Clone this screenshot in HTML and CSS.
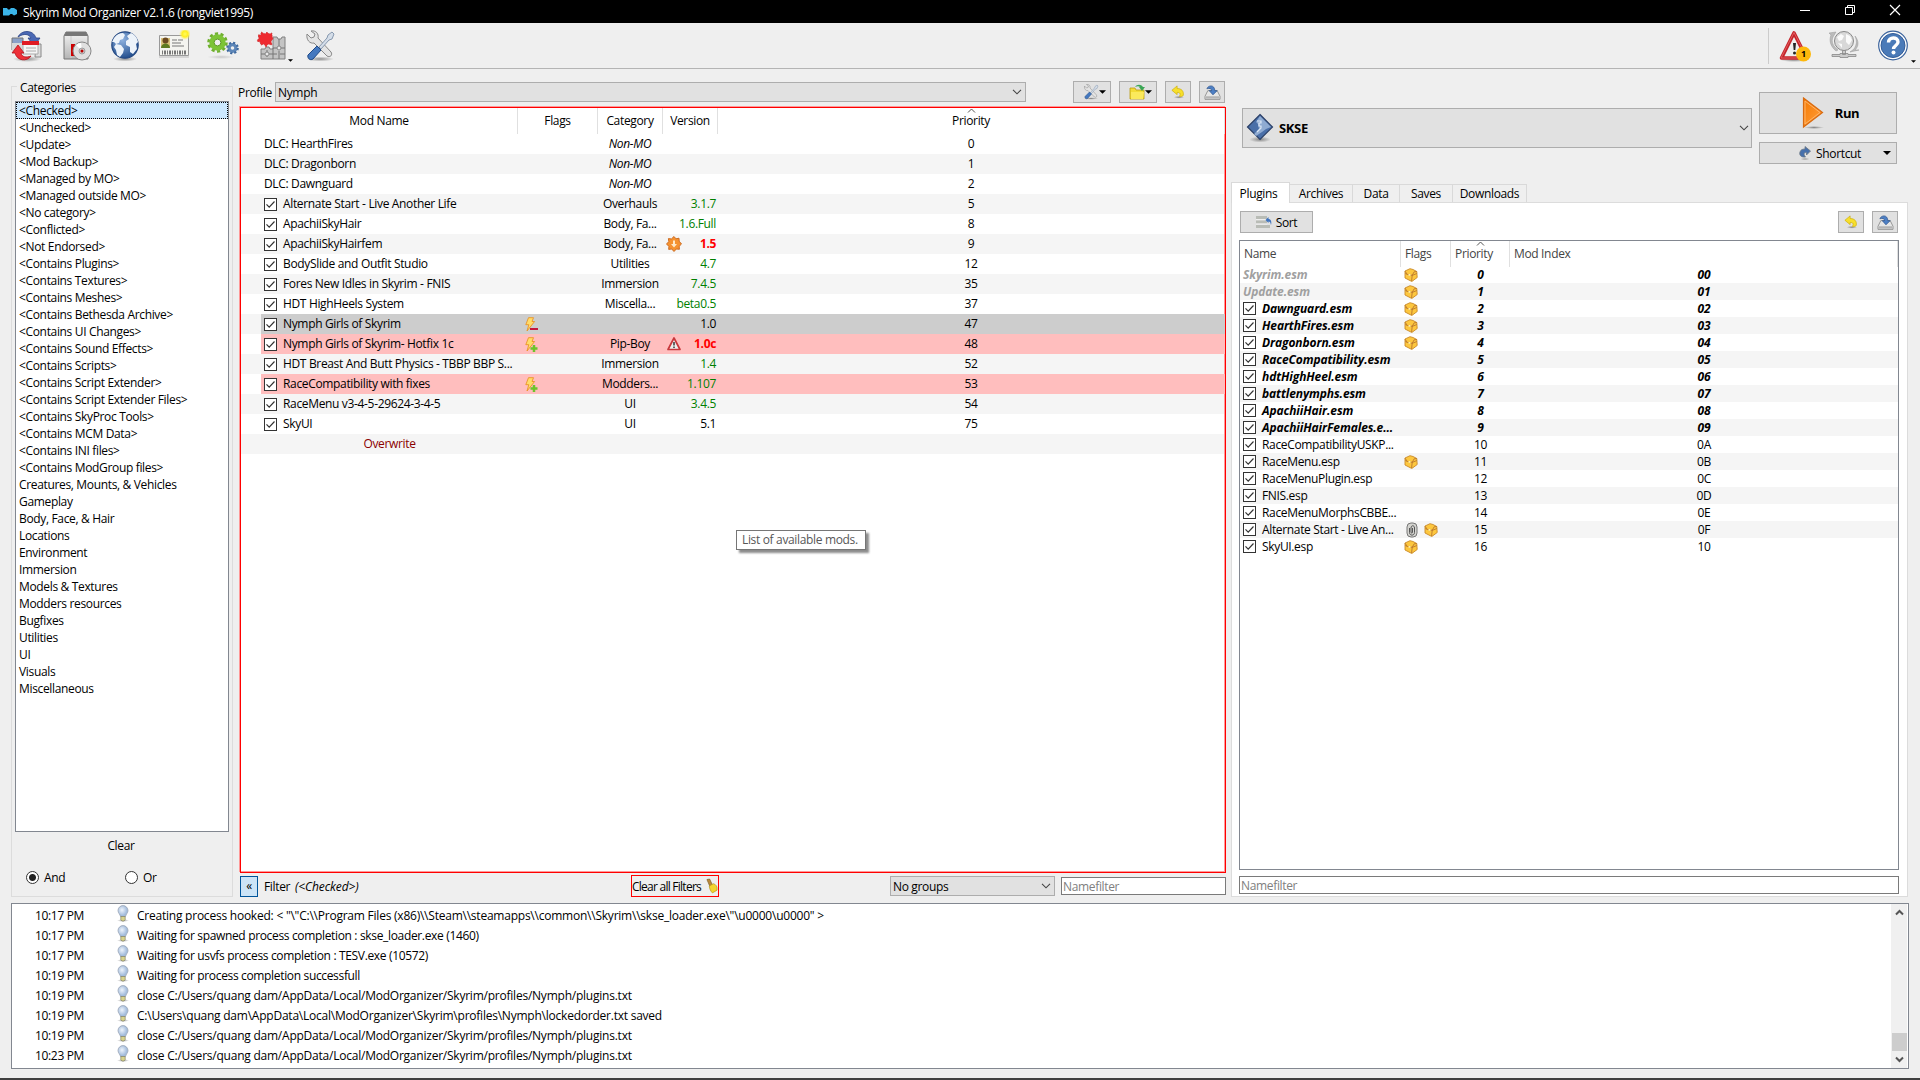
FILE: index.html
```html
<!DOCTYPE html>
<html>
    <head>
        <meta charset="UTF-8">
        <title>Skyrim Mod Organizer v2.1.6 (rongviet1995)</title>
        <link rel="stylesheet" href="styles.css">
    </head>
    <body>
        <!-- shared icons -->
        <svg class="defs">
            <defs>
                <linearGradient id="gBlue" x1="0" y1="0" x2="1" y2="1"><stop offset="0" stop-color="#b9cfec"/><stop offset="1" stop-color="#2f5796"/></linearGradient>
                <linearGradient id="gGrey" x1="0" y1="0" x2="0" y2="1"><stop offset="0" stop-color="#f4f4f4"/><stop offset="1" stop-color="#b4b4b4"/></linearGradient>
                <linearGradient id="gOrange" x1="0" y1="0" x2="1" y2="1"><stop offset="0" stop-color="#f57900"/><stop offset="1" stop-color="#ffa040"/></linearGradient>
                <radialGradient id="gOcean" cx=".4" cy=".3" r=".7"><stop offset="0" stop-color="#8fb2e0"/><stop offset="1" stop-color="#24508f"/></radialGradient>
                <radialGradient id="gShade"><stop offset="0" stop-color="#000" stop-opacity=".4"/><stop offset="1" stop-color="#000" stop-opacity="0"/></radialGradient>
                <radialGradient id="gSun"><stop offset="0" stop-color="#fffb60"/><stop offset=".5" stop-color="#ffee20"/><stop offset="1" stop-color="#fff36a" stop-opacity="0"/></radialGradient>
                <radialGradient id="gBulb" cx=".4" cy=".4"><stop offset="0" stop-color="#eef4fc"/><stop offset="1" stop-color="#a3bcdc"/></radialGradient>
            </defs>
            <symbol id="check" viewBox="0 0 13 13"><rect x=".5" y=".5" width="12" height="12" fill="#fff" stroke="#333"/><path d="M2.5 6.3l2.7 2.8 5.3-5.6" fill="none" stroke="#333" stroke-width="1.2"/></symbol>
            <symbol id="down" viewBox="0 0 10 6"><path d="M1 .8l4 4 4-4" fill="none" stroke="#444" stroke-width="1.1"/></symbol>
            <symbol id="tri" viewBox="0 0 8 4"><path d="M0 0h8L4 4z"/></symbol>
            <symbol id="box" viewBox="0 0 14 14"><path d="M1 3l5-2.3 3 .8 3.8 2 .4 6-5.4 4L1 10z" fill="#fdc73e" stroke="#c98a28" stroke-width=".9"/><path d="M1 3.2l2.4 3.3 4.8.8 2-3.5 2.6-.3M8.2 7.3l-.6 5.7M8 7.5l4.8-2M3.4 6.5l-2-1" fill="none" stroke="#b9762c" stroke-width=".9"/><path d="M4.5 6h2v1.8h-2z" fill="#fff0a8"/></symbol>
            <symbol id="bolt" viewBox="0 0 15 15"><path d="M4.500.700h5L8 4.500h2.600L3 14l1.800-6.300H1.800z" fill="#ffdc6a" stroke="#ea9426" stroke-width=".9"/></symbol>
            <symbol id="tools" viewBox="0 0 32 32"><ellipse cx="16" cy="29" rx="14" ry="2.5" fill="url(#gShade)"/><path d="M3 4l4 4 3-1 1-3-4-3c5-1 8 3 7 7l13 14c2 3-1 6-4 4L10 13C6 14 2 10 3 4z" fill="#e4e4e4" stroke="#888"/><path d="M28 2l2 2-2 5-3 1-8 9-2-2 8-9 1-3z" fill="#d4dde8" stroke="#7d90a8" stroke-width=".9"/><path d="M13 16l4 4-8 9c-3 2-6-1-5-4z" fill="#4478bf" stroke="#204a87"/></symbol>
            <symbol id="undo" viewBox="0 0 16 16"><ellipse cx="9" cy="14" rx="6" ry="1.6" fill="url(#gShade)"/><path d="M1 6l6-5v3c5 0 8 3 7 8-1 1-3 1.500-4.500 1C11.500 10 10 8.500 7 8.500V11z" fill="#f7df2c" stroke="#c8a900" stroke-width=".7"/></symbol>
            <symbol id="save" viewBox="0 0 18 16"><path d="M4 6h10l3 6v3.300H1V12z" fill="#e6e6e6" stroke="#888" stroke-width=".9"/><path d="M2 12h14v2.500H2z" fill="#b4b4b4"/><path d="M3 4c1-3 5-4 7-2 1 1 1.500 2.500 1.500 4H14l-4.500 4.500L5.500 6H8c0-2-2-3-5-2z" fill="#4d7fc4" stroke="#274e88" stroke-width=".7"/></symbol>
            <symbol id="bulb" viewBox="0 0 12 17"><ellipse cx="6" cy="15.500" rx="6" ry="1.500" fill="url(#gShade)"/><path d="M6 .6a5 5 0 0 1 5 5c0 2.500-2.200 3.600-2.500 6h-5C3.200 9.200 1 8.100 1 5.600a5 5 0 0 1 5-5z" fill="url(#gBulb)" stroke="#9aa5b5" stroke-width=".8"/><path d="M3.800 11.500h4.400v3.200L7 16H5l-1.200-1.300z" fill="#d8d38c" stroke="#77775a" stroke-width=".6"/></symbol>
        </svg>

        <header class="titlebar">
            <svg class="logo" width="14" height="8" viewBox="0 0 14 8"><path d="M0 0h4l1 1.500h1.500L8 0h3l3 2v4l-3 1.500L9 6H7.500L6 7.500H0z" fill="#3bb4e8"/></svg>
            <span class="title">Skyrim Mod Organizer v2.1.6 (rongviet1995)</span>
            <div class="winbtns">
                <svg width="12" height="12"><path d="M1 6.500h10" stroke="#fff"/></svg>
                <svg width="12" height="12" fill="none" stroke="#fff"><path d="M1.500 3.500h7v7h-7zM3.500 3v-1.500h7v7H9"/></svg>
                <svg width="12" height="12"><path d="M1 1l10 10M11 1L1 11" stroke="#fff" stroke-width="1.200"/></svg>
            </div>
        </header>

        <nav class="toolbar">
            <svg class="tool" viewBox="0 0 32 32"><ellipse cx="16" cy="29" rx="14" ry="3" fill="url(#gShade)"/><path d="M1 8h11v12H1z" fill="#8aa0c8" stroke="#777"/><path d="M1 13h11v8H1z" fill="#d8d8d8"/><path d="M25 14h5v13h-6z" fill="#ddd" stroke="#888"/><path d="M7 7c3-7 15-8 18 1h4l-6 8-6-8h3c-2-4-7-5-13-1z" fill="#4a68b4" stroke="#2c4486" stroke-width=".8"/><path d="M12 12h15v12H12z" fill="#f5f5f5" stroke="#aaa"/><path d="M11 11h17v4H11z" fill="#e01b24"/><path d="M15 18h10M15 21h10" stroke="#aaa"/><path d="M20 26c-4 6-14 5-16-3H1l6-8 6 8h-3c1 4 5 5 10 3z" fill="#ee3038" stroke="#b41018" stroke-width=".8"/></svg>
            <svg class="tool" viewBox="0 0 32 32"><path d="M6 2h20l2 4v23H4V6z" fill="url(#gGrey)" stroke="#777"/><path d="M4 6h24l-2-4H6z" fill="#777"/><path d="M11 6v22" stroke="#ccc"/><path d="M11 14h4v12h-4z" fill="#c00"/><circle cx="22" cy="21" r="9" fill="#e0e0e0" stroke="#888"/><path d="M22 21l-6-6a9 9 0 0 1 5-2z" fill="#fff"/><circle cx="22" cy="21" r="3" fill="#ccc" stroke="#888" stroke-width=".7"/><circle cx="22" cy="21" r="1.500" fill="#b00"/></svg>
            <svg class="tool" viewBox="0 0 32 32"><ellipse cx="16" cy="29" rx="12" ry="2.500" fill="url(#gShade)"/><circle cx="16" cy="15" r="13.200" fill="url(#gOcean)" stroke="#244882" stroke-width="1.200"/><path d="M5 8c3-4 6-5 9-5l2 2-2 4-3 1-1 3-3 1-2-2-2 0zM7 14l5 1 3 4-1 4-3 4-3-2-1-5-2-3zM18 6l4-3c4 2 6 4 7 9l-2 2 1 5-4 5-3-2 0-5-4-2 0-4 3-2z" fill="#edf3fa"/></svg>
            <svg class="tool" viewBox="0 0 32 32"><path d="M1.500 5.500h29v20h-29z" fill="#f4f4f0" stroke="#999"/><path d="M1 27h30" stroke="#bbb"/><path d="M3 8h9v10H3z" fill="#d9c27a"/><circle cx="7.500" cy="10.500" r="3" fill="#6b4a20"/><path d="M3 18c0-6 9-6 9 0z" fill="#5e7a20"/><path d="M14 10h5m1 0h5M14 13h9M14 16h12" stroke="#777"/><path d="M4 22.500h24" stroke="#777" stroke-width="4" stroke-dasharray="1 1 2 1"/><circle cx="27" cy="4" r="6" fill="url(#gSun)"/></svg>
            <svg class="tool" viewBox="0 0 32 32"><ellipse cx="14" cy="27" rx="14" ry="2" fill="url(#gShade)" opacity=".4"/><circle cx="10.500" cy="12.500" r="5.700" fill="none" stroke="#7cc436" stroke-width="5"/><circle cx="10.500" cy="12.500" r="9" fill="none" stroke="#6fb02e" stroke-width="2.500" stroke-dasharray="3.200 2.450"/><circle cx="10.500" cy="12.500" r="3.400" fill="#efefef" stroke="#5b9a20"/><circle cx="25.500" cy="18" r="3.400" fill="none" stroke="#5d86b8" stroke-width="3.200"/><circle cx="25.500" cy="18" r="5.300" fill="none" stroke="#3d689e" stroke-width="2" stroke-dasharray="2.100 2.060"/></svg>
            <div class="tool-drop">
                <svg class="tool" viewBox="0 0 32 32"><path d="M17 7h4l1 2h3l1-2h3v22H5V19h4l1-2h3l1 2h3z" fill="#c4c4c4" stroke="#808080"/><path d="M17 18v11M5 24h4m4 0h8m3 0h5M17 18h4m3 0h5M23 9v7m0 5v8M11 20v7" stroke="#777" fill="none"/><circle cx="11" cy="24" r="2" fill="#e8e8e8" stroke="#888"/><circle cx="23" cy="18" r="2" fill="#e8e8e8" stroke="#888"/><path d="M2 5l3 0 0-3 4 2 2-2 2 2 3-1v3l1 3-2 2 1 4-4-1-2 3-2-3-3 1-1-3-3-1 2-3z" fill="#ee2a30" stroke="#c33" stroke-width=".8" stroke-dasharray="2 1"/></svg>
                <svg class="tri" width="5" height="3"><use href="#tri"/></svg>
            </div>
            <svg class="tool"><use href="#tools"/></svg>
            <div class="toolbar-right">
                <svg class="tool" viewBox="0 0 32 32"><ellipse cx="15" cy="30" rx="14" ry="2" fill="url(#gShade)"/><path d="M15 3L27.500 28h-25z" fill="#efefef" stroke="#c4242a" stroke-width="3.600" stroke-linejoin="round"/><path d="M15 2.500L28 28H2z" fill="none" stroke="#e8686c" stroke-width=".8" stroke-linejoin="round"/><path d="M14 13h3l-.7 7h-1.600z" fill="#222"/><circle cx="15.500" cy="23" r="1.500" fill="#222"/><circle cx="24.500" cy="24" r="7.500" fill="#fdb80c"/><text x="24.500" y="27.200" class="badge">1</text></svg>
                <svg class="tool" viewBox="0 0 32 32"><path d="M1 3l7-1-3 5c-2 5 0 9 5 13l-2 1C2 16 1 10 3 5zM27 6c4 5 4 10 0 14h4l-9 2 4-3c3-5 3-8 1-13z" fill="#bbb" stroke="#999" stroke-width=".5"/><circle cx="16" cy="11" r="9.500" fill="#d8d8d8" stroke="#888"/><path d="M9 7l4-3 3 2-2 4-3 1zM18 4l4 2 2 4-3 5-3-3zM10 13l4 1 0 4z" fill="#fafafa"/><path d="M14.500 20.500h3v4h-3zM4 24.500h8v-1h8v1h8v2h-8v1h-8v-1H4z" fill="#ccc" stroke="#888" stroke-width=".8"/></svg>
                <svg class="tool" viewBox="0 0 32 32"><circle cx="16" cy="15.500" r="14.300" fill="#fff" stroke="#3a629c" stroke-width="1.200"/><circle cx="16" cy="15.500" r="12" fill="#4a7ab8" stroke="#345d98"/><path d="M11.500 12.500c0-6 9.500-6 9.500-.5 0 3.500-4.500 3.500-4.500 7" fill="none" stroke="#fff" stroke-width="3.400"/><circle cx="16.500" cy="22.500" r="2" fill="#fff"/></svg>
                <svg class="tri" width="5" height="3"><use href="#tri"/></svg>
            </div>
        </nav>

        <main class="main">
            <fieldset class="categories">
                <legend>Categories</legend>
                <ul class="cat-list">
                    <li class="selected">&lt;Checked&gt;</li>
                    <li>&lt;Unchecked&gt;</li>
                    <li>&lt;Update&gt;</li>
                    <li>&lt;Mod Backup&gt;</li>
                    <li>&lt;Managed by MO&gt;</li>
                    <li>&lt;Managed outside MO&gt;</li>
                    <li>&lt;No category&gt;</li>
                    <li>&lt;Conflicted&gt;</li>
                    <li>&lt;Not Endorsed&gt;</li>
                    <li>&lt;Contains Plugins&gt;</li>
                    <li>&lt;Contains Textures&gt;</li>
                    <li>&lt;Contains Meshes&gt;</li>
                    <li>&lt;Contains Bethesda Archive&gt;</li>
                    <li>&lt;Contains UI Changes&gt;</li>
                    <li>&lt;Contains Sound Effects&gt;</li>
                    <li>&lt;Contains Scripts&gt;</li>
                    <li>&lt;Contains Script Extender&gt;</li>
                    <li>&lt;Contains Script Extender Files&gt;</li>
                    <li>&lt;Contains SkyProc Tools&gt;</li>
                    <li>&lt;Contains MCM Data&gt;</li>
                    <li>&lt;Contains INI files&gt;</li>
                    <li>&lt;Contains ModGroup files&gt;</li>
                    <li>Creatures, Mounts, &amp; Vehicles</li>
                    <li>Gameplay</li>
                    <li>Body, Face, &amp; Hair</li>
                    <li>Locations</li>
                    <li>Environment</li>
                    <li>Immersion</li>
                    <li>Models &amp; Textures</li>
                    <li>Modders resources</li>
                    <li>Bugfixes</li>
                    <li>Utilities</li>
                    <li>UI</li>
                    <li>Visuals</li>
                    <li>Miscellaneous</li>
                </ul>
                <div class="cat-clear">Clear</div>
                <div class="cat-radios">
                    <span class="radio"><i class="dot on"></i>And</span>
                    <span class="radio"><i class="dot"></i>Or</span>
                </div>
            </fieldset>

            <section class="mods">
                <div class="profile-row">
                    <span class="profile-label">Profile</span>
                    <div class="combo profile-combo"><span>Nymph</span><svg width="10" height="6"><use href="#down"/></svg></div>
                    <span class="btn wide"><svg width="16" height="16"><use href="#tools"/></svg><svg width="7" height="4"><use href="#tri"/></svg></span>
                    <span class="btn wide"><svg width="16" height="16" viewBox="0 0 16 16"><path d="M1 4h5l1 2h8v9H1z" fill="#f4dc36" stroke="#b89a10" stroke-width=".8"/><path d="M2 8h13l-1 7H2z" fill="#fbe95c"/><path d="M6 3c2-3 6-3 8 0h2l-3 4-3-4h1c-1-1-3-1-5 0z" fill="#3aa655"/></svg><svg width="7" height="4"><use href="#tri"/></svg></span>
                    <span class="btn small"><svg width="14" height="14"><use href="#undo"/></svg></span>
                    <span class="btn small"><svg width="17" height="15"><use href="#save"/></svg></span>
                </div>
                <div class="mod-tree">
                    <div class="mod-row head"><span>Mod Name</span><span>Flags</span><span>Category</span><span>Version</span><span class="sorted">Priority</span></div>
                    <div class="mod-row"><span class="name">DLC: HearthFires</span><span class="flag"></span><span class="cat"><i>Non-MO</i></span><span class="ver"></span><span class="prio">0</span></div>
                    <div class="mod-row"><span class="name">DLC: Dragonborn</span><span class="flag"></span><span class="cat"><i>Non-MO</i></span><span class="ver"></span><span class="prio">1</span></div>
                    <div class="mod-row"><span class="name">DLC: Dawnguard</span><span class="flag"></span><span class="cat"><i>Non-MO</i></span><span class="ver"></span><span class="prio">2</span></div>
                    <div class="mod-row"><span class="name"><svg class="check"><use href="#check"/></svg>Alternate Start - Live Another Life</span><span class="flag"></span><span class="cat">Overhauls</span><span class="ver ok">3.1.7</span><span class="prio">5</span></div>
                    <div class="mod-row"><span class="name"><svg class="check"><use href="#check"/></svg>ApachiiSkyHair</span><span class="flag"></span><span class="cat">Body, Fa...</span><span class="ver ok">1.6.Full</span><span class="prio">8</span></div>
                    <div class="mod-row"><span class="name"><svg class="check"><use href="#check"/></svg>ApachiiSkyHairfem</span><span class="flag"></span><span class="cat">Body, Fa...</span><span class="ver old"><svg width="16" height="16" viewBox="0 0 16 16"><path d="M8 .5l2 2.300 3-.6.200 3L15.500 8l-2.300 2.300.2 3-3-.3L8 15.500 5.700 13l-3 .4.200-3L.5 8l2.300-2.400-.4-3 3 .3z" fill="#f59230" stroke="#c8641a" stroke-width=".9"/><path d="M7 4.500h2V8h2l-3 3.500L5 8h2z" fill="#ffe9c8"/></svg>1.5</span><span class="prio">9</span></div>
                    <div class="mod-row"><span class="name"><svg class="check"><use href="#check"/></svg>BodySlide and Outfit Studio</span><span class="flag"></span><span class="cat">Utilities</span><span class="ver ok">4.7</span><span class="prio">12</span></div>
                    <div class="mod-row"><span class="name"><svg class="check"><use href="#check"/></svg>Fores New Idles in Skyrim - FNIS</span><span class="flag"></span><span class="cat">Immersion</span><span class="ver ok">7.4.5</span><span class="prio">35</span></div>
                    <div class="mod-row"><span class="name"><svg class="check"><use href="#check"/></svg>HDT HighHeels System</span><span class="flag"></span><span class="cat">Miscella...</span><span class="ver ok">beta0.5</span><span class="prio">37</span></div>
                    <div class="mod-row current"><span class="name"><svg class="check"><use href="#check"/></svg>Nymph Girls of Skyrim</span><span class="flag"><svg width="15" height="15"><use href="#bolt"/><path d="M6 12h8" stroke="#c4163c" stroke-width="2"/></svg></span><span class="cat"></span><span class="ver">1.0</span><span class="prio">47</span></div>
                    <div class="mod-row conflict"><span class="name"><svg class="check"><use href="#check"/></svg>Nymph Girls of Skyrim- Hotfix 1c</span><span class="flag"><svg width="15" height="15"><use href="#bolt"/><path d="M10 8v7M6.500 11.500h7" stroke="#6cc42c" stroke-width="2.500"/></svg></span><span class="cat">Pip-Boy</span><span class="ver old"><svg width="16" height="16" viewBox="0 0 16 16"><path d="M8 2l6 11.500H2z" fill="#eee" stroke="#c8383c" stroke-width="1.700" stroke-linejoin="round"/><path d="M8 6v3.500m0 1v1.500" stroke="#555" stroke-width="1.800"/></svg>1.0c</span><span class="prio">48</span></div>
                    <div class="mod-row"><span class="name"><svg class="check"><use href="#check"/></svg>HDT Breast And Butt Physics - TBBP BBP S...</span><span class="flag"></span><span class="cat">Immersion</span><span class="ver ok">1.4</span><span class="prio">52</span></div>
                    <div class="mod-row conflict"><span class="name"><svg class="check"><use href="#check"/></svg>RaceCompatibility with fixes</span><span class="flag"><svg width="15" height="15"><use href="#bolt"/><path d="M10 8v7M6.500 11.500h7" stroke="#6cc42c" stroke-width="2.500"/></svg></span><span class="cat">Modders...</span><span class="ver ok">1.107</span><span class="prio">53</span></div>
                    <div class="mod-row"><span class="name"><svg class="check"><use href="#check"/></svg>RaceMenu v3-4-5-29624-3-4-5</span><span class="flag"></span><span class="cat">UI</span><span class="ver ok">3.4.5</span><span class="prio">54</span></div>
                    <div class="mod-row"><span class="name"><svg class="check"><use href="#check"/></svg>SkyUI</span><span class="flag"></span><span class="cat">UI</span><span class="ver">5.1</span><span class="prio">75</span></div>
                    <div class="mod-row"><span class="name overwrite">Overwrite</span><span class="flag"></span><span class="cat"></span><span class="ver"></span><span class="prio"></span></div>
                    <div class="tooltip">List of available mods.</div>
                </div>
                <div class="filter-row">
                    <span class="collapse">«</span>
                    <span class="filter-label">Filter</span>
                    <i class="filter-value">(&lt;Checked&gt;)</i>
                    <span class="clear-filters">Clear all Filters<svg width="12" height="16" viewBox="0 0 13 16"><path d="M1 1l3-.5L7 7 4 8z" fill="#b98a3c" stroke="#7c5a20" stroke-width=".7"/><path d="M3.500 8L8 5.500c3 1 4.500 3 4 7L7 15.500C4.500 13 4 11 3.500 8z" fill="#f3d52e" stroke="#b0921a" stroke-width=".7"/></svg></span>
                    <div class="combo groups"><span>No groups</span><svg width="10" height="6"><use href="#down"/></svg></div>
                    <input class="namefilter" type="text" placeholder="Namefilter">
                </div>
            </section>

            <section class="side">
                <div class="launch">
                    <div class="combo exe"><svg width="28" height="30" viewBox="0 0 28 30"><ellipse cx="14" cy="26.500" rx="11" ry="3" fill="url(#gShade)"/><path d="M14 1.500L26.500 14 14 26.500 1.500 14z" fill="#4a6fa8" stroke="#2a3f66" stroke-width="1.200"/><path d="M14 3L25 14l-5 2-4 3-6 4-2-2 5-5-1-5-2-2z" fill="#8fabd2"/><path d="M11 8h4v2h-2v3h2v2l-4 4" fill="none" stroke="#dbe6f5" stroke-width="1.200"/></svg><b>SKSE</b><svg width="10" height="6"><use href="#down"/></svg></div>
                    <div class="launch-btns">
                        <span class="btn run"><svg width="22" height="32" viewBox="0 0 22 32"><ellipse cx="12" cy="30.500" rx="10" ry="1.500" fill="url(#gShade)"/><path d="M1.500 1l19 14.500-19 14.500z" fill="url(#gOrange)" stroke="#d86a10" stroke-width="1.200"/><path d="M3 4l15 11.500L3 27z" fill="none" stroke="#ffb468"/></svg><b>Run</b></span>
                        <span class="btn shortcut"><svg width="12" height="14" viewBox="0 0 12 14"><ellipse cx="6" cy="13" rx="5" ry="1" fill="url(#gShade)"/><path d="M6 .5L11.500 5 7.500 9V6.500c-3 0-3 2-1 4.500C2 11.500 0 9 1 6c.6-2 2-3 5-3z" fill="#4670ac" stroke="#6a7684" stroke-width=".8"/></svg><span>Shortcut</span><svg class="arrow" width="8" height="4"><use href="#tri"/></svg></span>
                    </div>
                </div>
                <div class="tabs"><span class="tab active">Plugins</span><span class="tab w63">Archives</span><span class="tab w47">Data</span><span class="tab w53">Saves</span><span class="tab w74">Downloads</span></div>
                <div class="tab-page">
                    <div class="sort-row">
                        <span class="btn sort"><svg width="16" height="14" viewBox="0 0 16 14"><path d="M0 1h11v3H0zM0 5.500h11v3H0zM0 10h14v3H0z" fill="#b9bcb6"/><path d="M0 4.500h11M0 9h11" stroke="#efefef"/><path d="M15 10c1-4-.5-6-2.500-6V2L9.500 5l3 3V6.500c1.500 0 2 1 2.500 3.500z" fill="#3f73be"/></svg>Sort</span>
                        <span class="btn small"><svg width="14" height="14"><use href="#undo"/></svg></span>
                        <span class="btn small"><svg width="17" height="15"><use href="#save"/></svg></span>
                    </div>
                    <div class="plugin-tree">
                        <div class="plugin-row head"><span>Name</span><span>Flags</span><span class="sorted">Priority</span><span>Mod Index</span></div>
                        <div class="plugin-row master off"><span class="pname">Skyrim.esm</span><span class="pflag"><svg><use href="#box"/></svg></span><span>0</span><span>00</span></div>
                        <div class="plugin-row master off"><span class="pname">Update.esm</span><span class="pflag"><svg><use href="#box"/></svg></span><span>1</span><span>01</span></div>
                        <div class="plugin-row master"><span class="pname"><svg class="check"><use href="#check"/></svg>Dawnguard.esm</span><span class="pflag"><svg><use href="#box"/></svg></span><span>2</span><span>02</span></div>
                        <div class="plugin-row master"><span class="pname"><svg class="check"><use href="#check"/></svg>HearthFires.esm</span><span class="pflag"><svg><use href="#box"/></svg></span><span>3</span><span>03</span></div>
                        <div class="plugin-row master"><span class="pname"><svg class="check"><use href="#check"/></svg>Dragonborn.esm</span><span class="pflag"><svg><use href="#box"/></svg></span><span>4</span><span>04</span></div>
                        <div class="plugin-row master"><span class="pname"><svg class="check"><use href="#check"/></svg>RaceCompatibility.esm</span><span class="pflag"></span><span>5</span><span>05</span></div>
                        <div class="plugin-row master"><span class="pname"><svg class="check"><use href="#check"/></svg>hdtHighHeel.esm</span><span class="pflag"></span><span>6</span><span>06</span></div>
                        <div class="plugin-row master"><span class="pname"><svg class="check"><use href="#check"/></svg>battlenymphs.esm</span><span class="pflag"></span><span>7</span><span>07</span></div>
                        <div class="plugin-row master"><span class="pname"><svg class="check"><use href="#check"/></svg>ApachiiHair.esm</span><span class="pflag"></span><span>8</span><span>08</span></div>
                        <div class="plugin-row master"><span class="pname"><svg class="check"><use href="#check"/></svg>ApachiiHairFemales.e...</span><span class="pflag"></span><span>9</span><span>09</span></div>
                        <div class="plugin-row"><span class="pname"><svg class="check"><use href="#check"/></svg>RaceCompatibilityUSKP...</span><span class="pflag"></span><span>10</span><span>0A</span></div>
                        <div class="plugin-row"><span class="pname"><svg class="check"><use href="#check"/></svg>RaceMenu.esp</span><span class="pflag"><svg><use href="#box"/></svg></span><span>11</span><span>0B</span></div>
                        <div class="plugin-row"><span class="pname"><svg class="check"><use href="#check"/></svg>RaceMenuPlugin.esp</span><span class="pflag"></span><span>12</span><span>0C</span></div>
                        <div class="plugin-row"><span class="pname"><svg class="check"><use href="#check"/></svg>FNIS.esp</span><span class="pflag"></span><span>13</span><span>0D</span></div>
                        <div class="plugin-row"><span class="pname"><svg class="check"><use href="#check"/></svg>RaceMenuMorphsCBBE...</span><span class="pflag"></span><span>14</span><span>0E</span></div>
                        <div class="plugin-row"><span class="pname"><svg class="check"><use href="#check"/></svg>Alternate Start - Live An...</span><span class="pflag"><svg class="clip" viewBox="0 0 14 16"><rect x="3" y="1" width="10" height="14" rx="4" fill="#d4d4d0" stroke="#777"/><path d="M5.500 6v4.500c0 3.500 5 3.500 5 0V6c0-3-3.500-3-3.500 0v4c0 1.500 1.500 1.500 1.500 0V6" fill="none" stroke="#555"/></svg><svg><use href="#box"/></svg></span><span>15</span><span>0F</span></div>
                        <div class="plugin-row"><span class="pname"><svg class="check"><use href="#check"/></svg>SkyUI.esp</span><span class="pflag"><svg><use href="#box"/></svg></span><span>16</span><span>10</span></div>
                    </div>
                    <input class="namefilter" type="text" placeholder="Namefilter">
                </div>
            </section>
        </main>

        <section class="log">
            <div class="log-rows">
                <div class="log-row"><span>10:17 PM</span><svg><use href="#bulb"/></svg><span class="path">Creating process hooked: &lt; "\"C:\\Program Files (x86)\\Steam\\steamapps\\common\\Skyrim\\skse_loader.exe\"\u0000\u0000" &gt;</span></div>
                <div class="log-row"><span>10:17 PM</span><svg><use href="#bulb"/></svg><span>Waiting for spawned process completion : skse_loader.exe (1460)</span></div>
                <div class="log-row"><span>10:17 PM</span><svg><use href="#bulb"/></svg><span>Waiting for usvfs process completion : TESV.exe (10572)</span></div>
                <div class="log-row"><span>10:19 PM</span><svg><use href="#bulb"/></svg><span>Waiting for process completion successfull</span></div>
                <div class="log-row"><span>10:19 PM</span><svg><use href="#bulb"/></svg><span class="path">close C:/Users/quang dam/AppData/Local/ModOrganizer/Skyrim/profiles/Nymph/plugins.txt</span></div>
                <div class="log-row"><span>10:19 PM</span><svg><use href="#bulb"/></svg><span class="path">C:\Users\quang dam\AppData\Local\ModOrganizer\Skyrim\profiles\Nymph\lockedorder.txt saved</span></div>
                <div class="log-row"><span>10:19 PM</span><svg><use href="#bulb"/></svg><span class="path">close C:/Users/quang dam/AppData/Local/ModOrganizer/Skyrim/profiles/Nymph/plugins.txt</span></div>
                <div class="log-row"><span>10:23 PM</span><svg><use href="#bulb"/></svg><span class="path">close C:/Users/quang dam/AppData/Local/ModOrganizer/Skyrim/profiles/Nymph/plugins.txt</span></div>
            </div>
            <div class="scrollbar">
                <svg width="9" height="7" viewBox="0 0 9 7"><path d="M1 5.500L4.500 2 8 5.500" fill="none" stroke="#555" stroke-width="2"/></svg>
                <div class="thumb"></div>
                <svg width="9" height="7" viewBox="0 0 9 7"><path d="M1 1.500L4.500 5 8 1.500" fill="none" stroke="#555" stroke-width="2"/></svg>
            </div>
        </section>
        <footer class="edge"></footer>
    </body>
</html>
```
FILE: styles.css
```css
* {
    box-sizing: border-box;
}
body {
    margin: 0;
    width: 1920px;
    height: 1080px;
    overflow: hidden;
    display: flex;
    flex-direction: column;
    background: #efefef;
    color: #000;
    font-family: "Open Sans", "Noto Sans", sans-serif;
    font-size: 12px;
    letter-spacing: -0.34px;
    white-space: nowrap;
    cursor: default;
}
svg {
    flex: none;
    display: block;
}
.defs {
    position: absolute;
    width: 0;
    height: 0;
}

/* title bar */
.titlebar {
    height: 23px;
    background: #000;
    color: #fff;
    display: flex;
    align-items: center;
    padding-left: 3px;
}
.title {
    margin: 1px 0 0 6px;
}
.winbtns {
    margin-left: auto;
    display: flex;
    gap: 33px;
    padding: 0 19px 3px 0;
}

/* toolbar */
.toolbar {
    height: 46px;
    border-bottom: 1px solid #b4b4b4;
    display: flex;
    align-items: center;
    gap: 17px;
    padding: 1px 4px 0 11px;
}
.tool {
    width: 32px;
    height: 32px;
}
.tool-drop {
    display: flex;
    align-items: flex-end;
}
.tool-drop .tri {
    margin-right: -6px;
}
.toolbar-right {
    margin-left: auto;
    height: 36px;
    border-left: 1px solid #ccc;
    padding-left: 10px;
    display: flex;
    align-items: center;
    gap: 17px;
}
.toolbar-right .tri {
    margin: 30px 0 0 -15px;
}
.badge {
    font-size: 9px;
    font-weight: bold;
    text-anchor: middle;
    letter-spacing: 0;
}

.main {
    height: 834px;
    display: flex;
}
.btn {
    flex: none;
    display: flex;
    align-items: center;
    justify-content: center;
    height: 22px;
    border: 1px solid #adadad;
    background: #e1e1e1;
}
.btn.wide {
    width: 38px;
    margin-right: 8px;
    padding-left: 4px;
}
.btn.small {
    width: 26px;
}
.combo {
    display: flex;
    align-items: center;
    justify-content: space-between;
    height: 20px;
    border: 1px solid #adadad;
    background: #e1e1e1;
    padding: 0 3px 0 2px;
}
.check {
    width: 13px;
    height: 13px;
}

/* categories */
.categories {
    width: 222px;
    height: 819px;
    min-width: 0;
    margin: 9px 0 0 11px;
    padding: 7px 3px 0;
    border: 1px solid #dcdcdc;
}
.categories legend {
    height: 16px;
    line-height: 19px;
    margin-left: 2px;
    padding: 0 3px;
}
.cat-list {
    list-style: none;
    margin: 0;
    padding: 0;
    width: 214px;
    height: 731px;
    border: 1px solid #828790;
    background: #fff;
}
.cat-list li {
    height: 17px;
    line-height: 17px;
    padding-left: 3px;
}
.cat-list .selected {
    background: #cce8ff;
    outline: 1px dotted #000;
    outline-offset: -1px;
}
.cat-clear {
    text-align: center;
    margin-top: 5px;
    padding-right: 2px;
    line-height: 17px;
}
.cat-radios {
    display: flex;
    margin: 15px 0 0 11px;
}
.radio {
    display: flex;
    align-items: center;
    width: 99px;
    gap: 5px;
}
.dot {
    width: 13px;
    height: 13px;
    border: 1px solid #333;
    border-radius: 50%;
    background: #fff;
}
.dot.on {
    background: radial-gradient(circle, #222 3px, #fff 4px);
}

/* mod list */
.mods {
    width: 988px;
    margin-left: 5px;
    padding-top: 12px;
}
.profile-row {
    display: flex;
    align-items: center;
    height: 22px;
}
.profile-label {
    width: 37px;
}
.profile-combo {
    width: 751px;
    margin-right: 47px;
}
.profile-row .small + .small {
    margin-left: 8px;
}
.mod-tree {
    position: relative;
    height: 766px;
    margin: 4px 0 0 2px;
    border: 1px solid #f00;
    box-shadow: -1px -1px #f99, inset -1px -1px #f99;
    background: #fff;
}
.mod-row {
    display: grid;
    grid-template-columns: 277px 80px 65px 55px 507px;
    height: 20px;
    line-height: 20px;
    margin-right: 1px;
}
.mod-row:nth-child(odd) {
    background: #f5f5f5;
}
.mod-row.head {
    height: 25px;
    line-height: 26px;
    margin-bottom: 1px;
    text-align: center;
    background: #fff;
}
.head > span {
    border-right: 1px solid #e0e0e0;
}
.sorted {
    background: url("data:image/svg+xml,%3Csvg xmlns='http://www.w3.org/2000/svg' width='9' height='5'%3E%3Cpath d='M1 4.500l3.500-3.500 3.500 3.500' fill='none' stroke='%23555'/%3E%3C/svg%3E") center 0 no-repeat;
}
.name {
    display: flex;
    align-items: center;
    gap: 6px;
    margin-left: 20px;
    padding-left: 3px;
}
.overwrite {
    justify-content: center;
    padding-left: 0;
    color: #8b0000;
}
.flag {
    display: flex;
    align-items: center;
    padding-left: 6px;
}
.cat,
.prio {
    text-align: center;
    padding-right: 1px;
}
.ver {
    display: flex;
    align-items: center;
    justify-content: flex-end;
    padding: 0 2px 0 3px;
}
.ver svg {
    margin-right: auto;
}
.ver.ok {
    color: #008000;
}
.ver.old {
    color: #f00;
    font-weight: bold;
}
.mod-row.current > span {
    background: #cdcdcd;
}
.mod-row.conflict > span {
    background: #ffbebe;
}
.tooltip {
    position: absolute;
    left: 495px;
    top: 422px;
    width: 130px;
    height: 20px;
    line-height: 18px;
    padding-left: 5px;
    color: #575757;
    background: #fff;
    border: 1px solid #767676;
    box-shadow: 3px 3px 2px rgba(0, 0, 0, 0.45);
}

.filter-row {
    display: flex;
    align-items: center;
    height: 22px;
    margin: 2px 0 0 2px;
}
.collapse {
    width: 18px;
    height: 21px;
    line-height: 18px;
    text-align: center;
    border: 1px solid #00549a;
    background: #cce4f7;
}
.filter-label {
    width: 31px;
    margin-left: 6px;
}
.filter-value {
    width: 336px;
    letter-spacing: -0.1px;
}
.clear-filters {
    display: flex;
    align-items: center;
    justify-content: space-between;
    width: 88px;
    height: 22px;
    border: 1px solid #f00;
    letter-spacing: -0.75px;
}
.groups {
    width: 165px;
    margin: 0 6px 0 171px;
}
.namefilter {
    width: 165px;
    height: 18px;
    padding: 0 1px;
    border: 1px solid #7a7a7a;
    background: #fff;
    font: inherit;
    letter-spacing: inherit;
}
.namefilter::placeholder {
    color: #808080;
}

/* right side */
.side {
    width: 677px;
    margin-left: 5px;
    padding-top: 23px;
}
.launch {
    display: flex;
    height: 90px;
    padding-left: 11px;
}
.exe {
    width: 510px;
    height: 40px;
    margin: 16px 7px 0 0;
    padding: 0 2px 0 3px;
    font-size: 13px;
}
.exe b {
    margin: 0 auto 0 5px;
}
.run {
    width: 138px;
    height: 42px;
    margin-bottom: 8px;
    padding-left: 5px;
    gap: 11px;
    font-size: 13px;
}
.shortcut {
    width: 138px;
    padding: 0 5px 0 39px;
    gap: 5px;
}
.shortcut .arrow {
    margin-left: auto;
}
.tabs {
    display: flex;
    align-items: flex-end;
    height: 20px;
}
.tab {
    height: 18px;
    line-height: 18px;
    text-align: center;
    border: 1px solid #d9d9d9;
    border-width: 1px 1px 0 0;
}
.tab.active {
    width: 59px;
    height: 21px;
    margin-bottom: -1px;
    padding-right: 4px;
    border-left-width: 1px;
    background: #fff;
    z-index: 1;
    line-height: 21px;
}
.w63 {
    width: 63px;
}
.w47 {
    width: 47px;
}
.w53 {
    width: 53px;
}
.w74 {
    width: 74px;
}
.tab-page {
    height: 695px;
    border: 1px solid #dcdcdc;
    background: #fff;
    padding: 8px 8px 0 7px;
}
.sort-row {
    display: flex;
    margin: 0 1px 7px;
}
.sort-row .small {
    margin-left: 8px;
}
.sort {
    width: 73px;
    gap: 4px;
    margin-right: auto;
}
.plugin-tree {
    height: 630px;
    border: 1px solid #828790;
    margin-bottom: 6px;
}
.plugin-row {
    display: grid;
    grid-template-columns: 161px 50px 59px 388px;
    height: 17px;
    line-height: 17px;
    text-align: center;
}
.plugin-row:nth-child(odd) {
    background: #f5f5f5;
}
.plugin-row.head {
    height: 25px;
    line-height: 26px;
    background: #fff;
    color: #444;
    text-align: left;
}
.plugin-row.head > span {
    padding-left: 4px;
}
.pname,
.pflag {
    display: flex;
    align-items: center;
    gap: 6px;
    padding-left: 3px;
}
.pflag svg {
    width: 14px;
    height: 14px;
}
.pflag .clip {
    height: 16px;
}
.master {
    font-weight: bold;
    font-style: italic;
    letter-spacing: -0.1px;
}
.off .pname {
    color: #a0a0a0;
}
.tab-page .namefilter {
    display: block;
    width: 660px;
}

/* log */
.log {
    display: flex;
    width: 1898px;
    height: 166px;
    margin-left: 11px;
    border: 1px solid #828790;
    background: #fff;
}
.log-rows {
    flex: 1;
    padding-top: 1px;
}
.log-row {
    display: flex;
    height: 20px;
    line-height: 21px;
}
.log-row span:first-child {
    width: 82px;
    margin-left: 23px;
}
.log-row svg {
    width: 12px;
    height: 17px;
    margin-right: 8px;
}
.log-row .path {
    letter-spacing: -0.23px;
}
.scrollbar {
    width: 16px;
    margin-right: 1px;
    background: #f0f0f0;
    display: flex;
    flex-direction: column;
    align-items: center;
    padding: 5px 0;
}
.thumb {
    width: 15px;
    height: 18px;
    margin: auto 0 5px;
    background: #cdcdcd;
}
.edge {
    height: 2px;
    margin-top: auto;
    background: #404040;
}
```
